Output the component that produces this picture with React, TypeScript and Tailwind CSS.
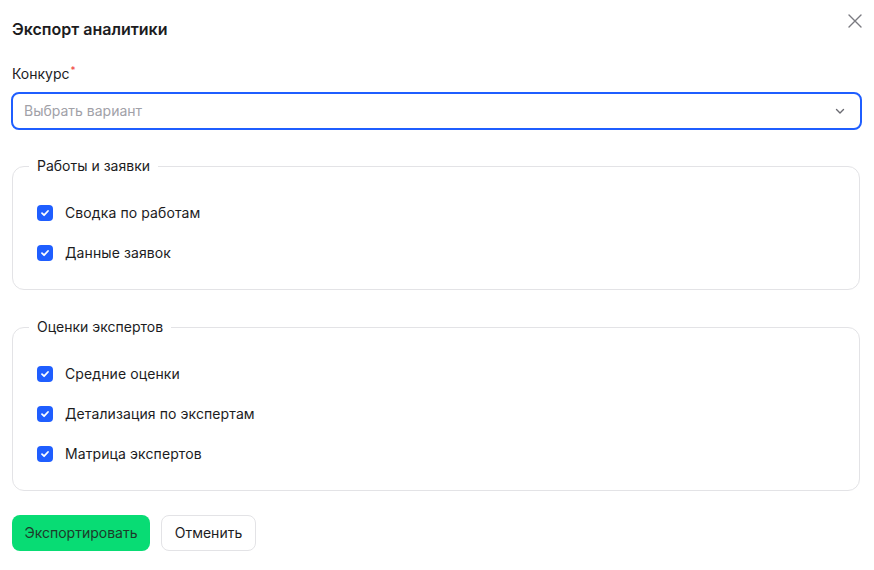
import React from 'react';

const CheckRow = ({ label }: { label: string }) => (
  <label className="flex h-6 items-center gap-3 text-sm tracking-[0.1px] text-[#1c1c1e]">
    <span className="flex h-4 w-4 items-center justify-center rounded-[4px] bg-[#1f5eff]">
      <svg width="10" height="10" viewBox="0 0 10 10" fill="none">
        <path d="M2 5.2 4.1 7.2 8 3" stroke="white" strokeWidth="1.8" strokeLinecap="round" strokeLinejoin="round" />
      </svg>
    </span>
    {label}
  </label>
);

const Group = ({ title, items, className }: { title: string; items: string[]; className?: string }) => (
  <fieldset className={`rounded-xl border border-[#e3e3e6] px-4 pt-[25px] pb-6 ${className ?? ''}`}>
    <legend className="px-2 text-sm leading-5 text-[#1c1c1e]">{title}</legend>
    <div className="flex flex-col gap-4 pl-2">
      {items.map((it) => (
        <CheckRow key={it} label={it} />
      ))}
    </div>
  </fieldset>
);

export default function App() {
  return (
    <div className="relative min-h-[570px] bg-white px-3 pt-[17px] font-['Inter',sans-serif] text-[#1c1c1e]">
      <button className="absolute right-[11px] top-[13px] text-[#7a7a80]" title="Закрыть">
        <svg width="16" height="16" viewBox="0 0 16 16" fill="none">
          <path d="M2 2 14 14M14 2 2 14" stroke="currentColor" strokeWidth="1.4" strokeLinecap="round" />
        </svg>
      </button>

      <h1 className="text-base font-semibold leading-6">Экспорт аналитики</h1>

      <div className="mt-[23px]">
        <div className="text-sm leading-5">
          Конкурс<sup className="ml-px text-[10px] text-[#f0413b]">*</sup>
        </div>
        <div className="-ml-px mt-2 flex h-[38px] items-center justify-between rounded-lg border-2 border-[#1f5eff] pl-[11px] pr-[14px] text-sm text-[#a1a1a8]">
          <span>Выбрать вариант</span>
          <svg width="12" height="12" viewBox="0 0 12 12" fill="none" className="text-[#6b6b72]">
            <path d="M2.5 4.5 6 8l3.5-3.5" stroke="currentColor" strokeWidth="1.4" strokeLinecap="round" strokeLinejoin="round" />
          </svg>
        </div>
      </div>

      <Group className="mt-[26px] mr-[2px]" title="Работы и заявки" items={['Сводка по работам', 'Данные заявок']} />
      <Group
        className="mt-[27px] mr-[2px]"
        title="Оценки экспертов"
        items={['Средние оценки', 'Детализация по экспертам', 'Матрица экспертов']}
      />

      <div className="mt-6 flex gap-[11px]">
        <button className="h-9 w-[138px] rounded-lg bg-[#08dc74] text-sm text-[#1d3a2a]">Экспортировать</button>
        <button className="h-9 w-[95px] rounded-lg border border-[#e3e3e6] bg-white text-sm text-[#1c1c1e]">Отменить</button>
      </div>
    </div>
  );
}
